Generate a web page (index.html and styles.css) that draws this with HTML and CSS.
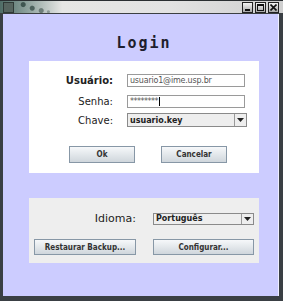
FILE: index.html
```html
<!DOCTYPE html>
<html lang="pt">
<head>
    <meta charset="UTF-8">
    <title>Login</title>
    <link rel="stylesheet" href="styles.css">
</head>
<body>
    <div class="window">
        <div class="titlebar">
            <div class="app-icon"></div>
            <div class="splash"></div>
            <div class="win-btns">
                <span class="win-btn">
                    <svg width="7" height="7" viewBox="0 0 7 7"><rect x="1" y="5" width="5" height="2" fill="#111"/></svg>
                </span>
                <span class="win-btn">
                    <svg width="7" height="7" viewBox="0 0 7 7"><rect x="0.5" y="0.5" width="6" height="6" fill="none" stroke="#111"/><rect x="0" y="0" width="7" height="2" fill="#111"/></svg>
                </span>
                <span class="win-btn">
                    <svg width="7" height="7" viewBox="0 0 7 7"><path d="M0.5 0.5 L6.5 6.5 M6.5 0.5 L0.5 6.5" stroke="#111" stroke-width="1.6"/></svg>
                </span>
            </div>
        </div>
        <div class="client">
            <h1 class="title">Login</h1>
            <div class="panel login-panel">
                <div class="form-row row-user">
                    <label class="label bold">Usuário:</label>
                    <div class="field">usuario1@ime.usp.br</div>
                </div>
                <div class="form-row row-pass">
                    <label class="label">Senha:</label>
                    <div class="field pass">********<span class="caret"></span></div>
                </div>
                <div class="form-row row-key">
                    <label class="label">Chave:</label>
                    <div class="combo wide">
                        <span class="combo-text">usuario.key</span>
                        <span class="combo-arrow"><svg width="7" height="4" viewBox="0 0 7 4"><path d="M0 0 H7 L3.5 4 Z" fill="#222"/></svg></span>
                    </div>
                </div>
                <div class="buttons">
                    <button class="btn">Ok</button>
                    <button class="btn">Cancelar</button>
                </div>
            </div>
            <div class="panel options-panel">
                <div class="opt-row">
                    <label class="label idioma">Idioma:</label>
                    <div class="combo">
                        <span class="combo-text">Português</span>
                        <span class="combo-arrow"><svg width="7" height="4" viewBox="0 0 7 4"><path d="M0 0 H7 L3.5 4 Z" fill="#222"/></svg></span>
                    </div>
                </div>
                <div class="opt-row btn-row">
                    <button class="btn">Restaurar Backup...</button>
                    <button class="btn">Configurar...</button>
                </div>
            </div>
        </div>
    </div>
</body>
</html>
```

FILE: styles.css
```css
body, html {
    margin: 0;
    padding: 0;
    background: #2e3236;
    font-family: 'DejaVu Sans', sans-serif;
}
.window {
    width: 283px;
    height: 301px;
    display: flex;
    flex-direction: column;
    background: #3a3f44;
    box-sizing: border-box;
}
.titlebar {
    height: 14px;
    display: flex;
    align-items: center;
    background: linear-gradient(90deg, #4f6c66 0%, #8fa39e 10%, #e6e6e4 22%, #e2e2e2 60%, #cfcfcf 100%);
    border-top: 1px solid #2a2e31;
    border-bottom: 1px solid #3b3f42;
    box-sizing: border-box;
}
.app-icon {
    width: 9px;
    height: 9px;
    margin-left: 3px;
    background: #56645f;
    border: 1px solid #2f3a37;
}
.splash {
    width: 36px;
    height: 12px;
    margin-left: 2px;
    background:
        radial-gradient(circle at 20% 30%, #3f5651 0 2px, transparent 3px),
        radial-gradient(circle at 45% 60%, #4d625d 0 2px, transparent 3px),
        radial-gradient(circle at 70% 80%, #6c7c78 0 2px, transparent 3px),
        radial-gradient(circle at 90% 90%, #8a9894 0 1px, transparent 2px);
}
.win-btns {
    margin-left: auto;
    margin-right: 4px;
    display: flex;
    gap: 2px;
}
.win-btn {
    width: 9px;
    height: 9px;
    border: 1px solid #222;
    background: linear-gradient(#f4f4f4, #a8a8a8);
    display: flex;
    align-items: center;
    justify-content: center;
}
.client {
    flex: 1;
    margin: 0 4px 5px 3px;
    background: #ccccff;
    padding: 20px 0 0 26px;
    border-right: 1px solid #eef;
}
.title {
    margin: 0 0 9px 0;
    width: 230px;
    text-align: center;
    font-size: 15px;
    line-height: 18px;
    font-weight: bold;
    letter-spacing: 2px;
    color: #1e1e2e;
    font-family: 'DejaVu Sans Mono', monospace;
}
.panel {
    width: 230px;
    box-sizing: border-box;
}
.login-panel {
    background: #ffffff;
    padding: 13px 0 10px 0;
    height: 112px;
}
.form-row {
    display: flex;
    align-items: center;
    height: 13px;
}
.row-pass { margin-top: 8px; }
.row-key { margin-top: 5px; height: 14px; }
.label {
    width: 84px;
    text-align: right;
    margin-right: 14px;
    font-size: 10px;
    color: #222;
}
.bold { font-weight: bold; }
.field {
    width: 118px;
    height: 13px;
    box-sizing: border-box;
    border: 1px solid #9a9a9a;
    font-size: 8px;
    line-height: 11px;
    color: #555;
    padding-left: 2px;
    background: #fff;
    letter-spacing: -0.2px;
}
.pass {
    letter-spacing: -0.5px;
    display: flex;
    align-items: center;
}
.caret {
    width: 1px;
    height: 9px;
    background: #000;
    margin-left: 1px;
}
.combo {
    width: 101px;
    height: 12px;
    box-sizing: border-box;
    border: 1px solid #8a8a8a;
    background: #eeeeee;
    display: flex;
    align-items: center;
}
.combo.wide {
    width: 120px;
    height: 14px;
}
.combo-text {
    flex: 1;
    font-size: 8px;
    font-weight: bold;
    color: #222;
    padding-left: 2px;
}
.combo-arrow {
    width: 11px;
    height: 100%;
    border-left: 1px solid #9a9a9a;
    display: flex;
    align-items: center;
    justify-content: center;
}
.buttons {
    display: flex;
    gap: 26px;
    padding-left: 40px;
    margin-top: 19px;
}
.btn {
    width: 66px;
    height: 17px;
    padding: 0;
    border: 1px solid #8797a6;
    background: linear-gradient(#f6f8fa, #dfe4e8 60%, #cfd6dc);
    font-family: 'DejaVu Sans Condensed', 'DejaVu Sans', sans-serif;
    font-size: 8px;
    font-weight: bold;
    color: #333;
}
.options-panel {
    margin-top: 25px;
    background: #eeeeee;
    height: 65px;
    padding: 14px 0 0 5px;
}
.opt-row {
    display: grid;
    grid-template-columns: 102px 101px;
    column-gap: 17px;
    align-items: center;
}
.idioma {
    width: auto;
    margin: 0;
    font-size: 11px;
    justify-self: end;
}
.btn-row {
    margin-top: 14px;
}
.btn-row .btn {
    width: 100%;
    height: 16px;
}
```
